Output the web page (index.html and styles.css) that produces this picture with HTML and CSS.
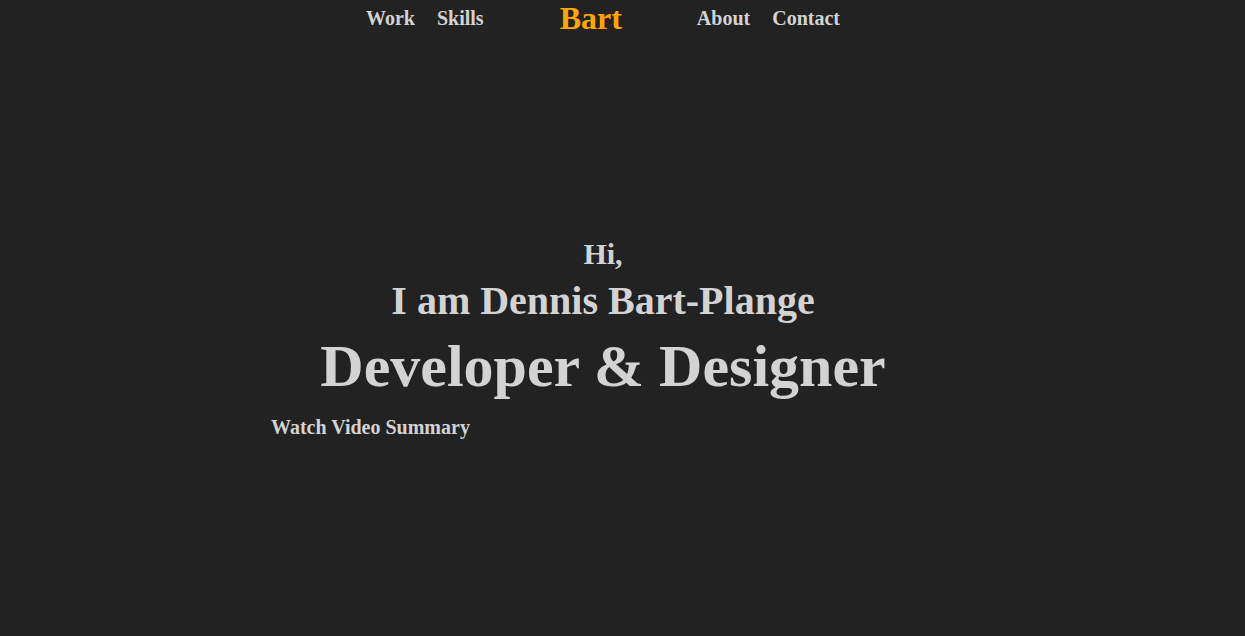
FILE: index.html
```html
<!DOCTYPE html>
<html lang="en">
<head>
<meta charset="utf-8">
<title>Bart</title>
<link rel="stylesheet" href="styles.css">
</head>
<body>
<div class="page">
  <nav class="nav">
    <a class="nav-link" href="#work">Work</a>
    <a class="nav-link" href="#skills">Skills</a>
    <a class="logo" href="#">Bart</a>
    <a class="nav-link" href="#about">About</a>
    <a class="nav-link" href="#contact">Contact</a>
  </nav>
  <section class="hero">
    <h2 class="hi">Hi,</h2>
    <h1 class="name">I am Dennis Bart-Plange</h1>
    <p class="role">Developer &amp; Designer</p>
    <a class="video" href="#">Watch Video Summary</a>
  </section>
</div>
</body>
</html>
```

FILE: styles.css
```css
html, body {
  margin: 0;
  padding: 0;
  background: #222222;
  height: 100%;
}
body {
  font-family: "Liberation Serif", "Times New Roman", serif;
  font-weight: bold;
  color: #d3d3d3;
}
.page {
  width: 664px;
  margin-left: 271px;
}
.nav {
  display: flex;
  justify-content: center;
  align-items: center;
  height: 37px;
}
.nav-link {
  color: #d3d3d3;
  text-decoration: none;
  font-size: 20px;
  padding: 0 11px;
}
.logo {
  color: #ffa500;
  text-decoration: none;
  font-size: 32px;
  margin: 0 64px 0 65px;
}
.hero {
  display: flex;
  flex-direction: column;
  padding-top: 200px;
}
.hi, .name, .role {
  margin: 0;
  text-align: center;
  font-weight: bold;
}
.hi {
  font-size: 30px;
}
.name {
  font-size: 40px;
  margin-top: 6px;
}
.role {
  font-size: 60px;
  margin-top: 8px;
}
.video {
  align-self: flex-start;
  color: #d3d3d3;
  text-decoration: none;
  font-size: 20px;
  margin-top: 15px;
}
```
